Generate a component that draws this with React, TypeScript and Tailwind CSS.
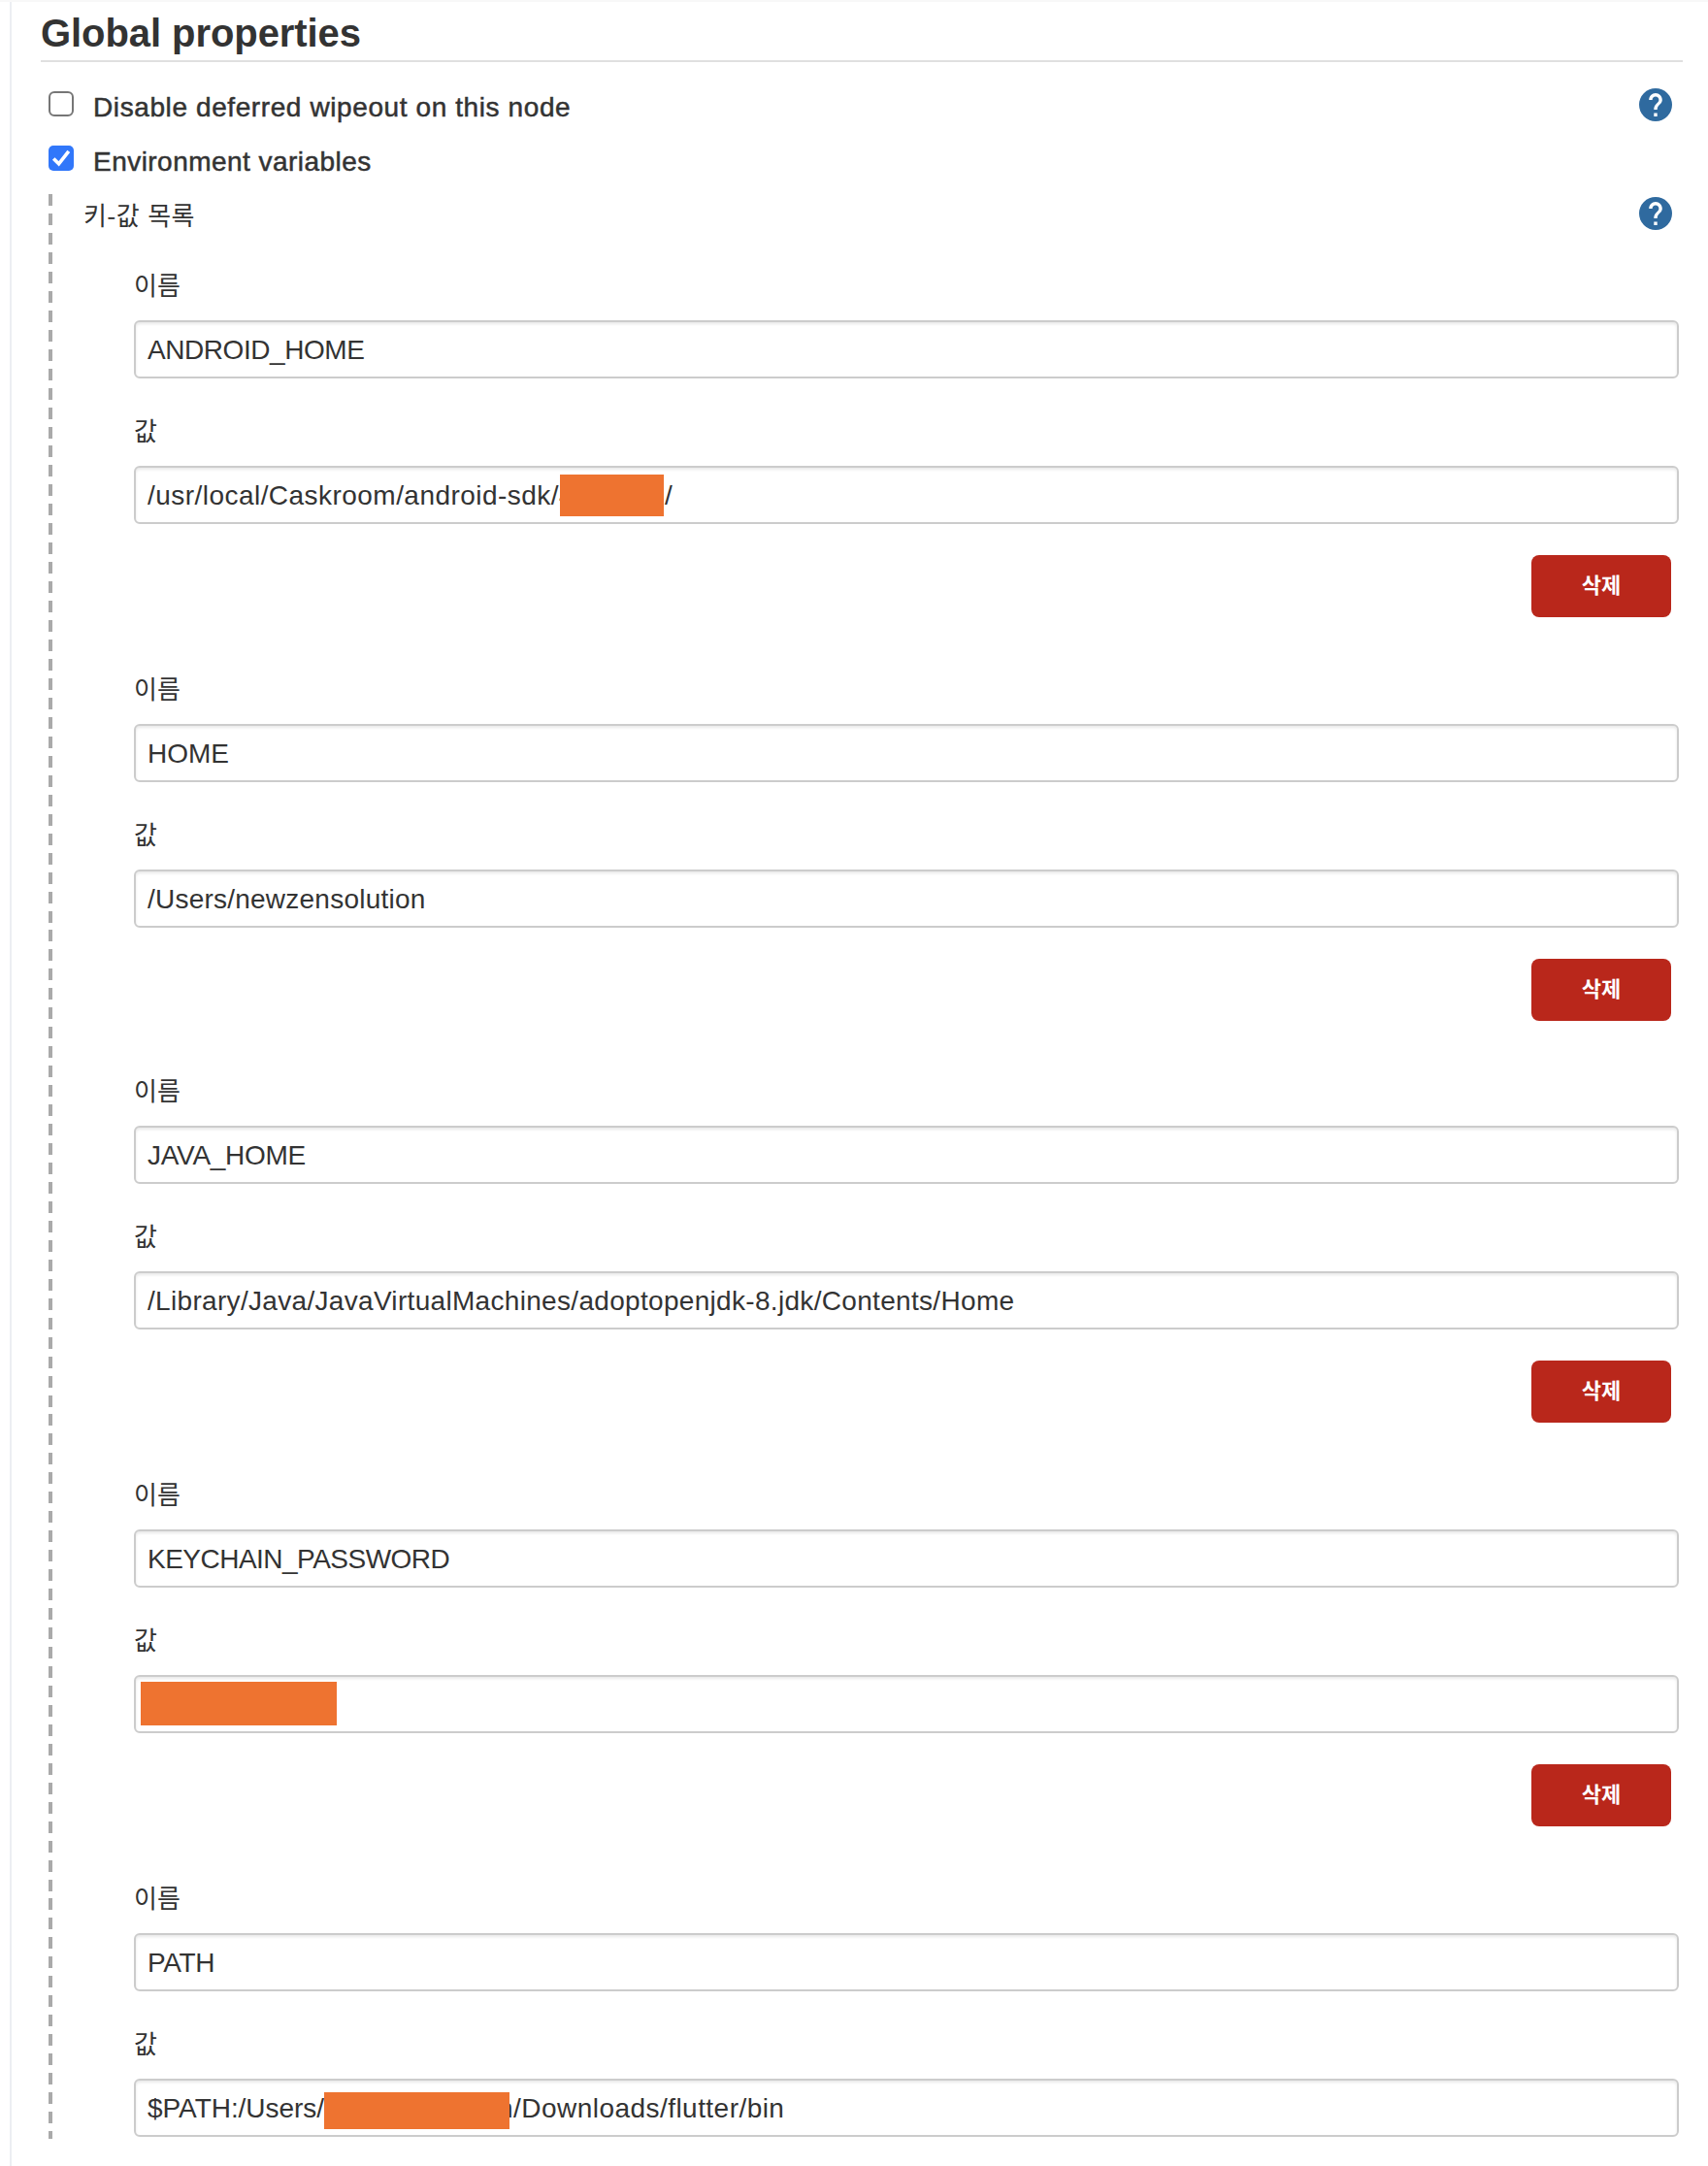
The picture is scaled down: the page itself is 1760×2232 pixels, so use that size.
import type { ReactNode } from "react";

type Variable = {
  name: ReactNode;
  value: ReactNode;
};

function Redaction({ className }: { className: string }) {
  return <span className={`relative shrink-0 bg-[#ee7330] ${className}`} />;
}

const variables: Variable[] = [
  {
    name: <span className="tracking-[-0.434px]">ANDROID_HOME</span>,
    value: (
      <>
        <span className="w-[425px] tracking-[0.459px]">/usr/local/Caskroom/android-sdk/4</span>
        <Redaction className="mt-[7px] h-[43px] w-[107px]" />
        <span className="ml-px">/</span>
      </>
    ),
  },
  {
    name: <span>HOME</span>,
    value: <span className="tracking-[0.228px]">/Users/newzensolution</span>,
  },
  {
    name: <span className="tracking-[-0.273px]">JAVA_HOME</span>,
    value: (
      <span className="tracking-[0.315px]">
        /Library/Java/JavaVirtualMachines/adoptopenjdk-8.jdk/Contents/Home
      </span>
    ),
  },
  {
    name: <span className="tracking-[-0.513px]">KEYCHAIN_PASSWORD</span>,
    value: <Redaction className="mt-[5px] -ml-[7px] h-[45px] w-[202px]" />,
  },
  {
    name: <span className="tracking-[-0.383px]">PATH</span>,
    value: (
      <>
        <span className="w-[182px] tracking-[-0.043px]">$PATH:/Users/</span>
        <Redaction className="z-10 mt-[12px] h-[38px] w-[191px]" />
        <span className="-ml-[12px] tracking-[0.46px]">n/Downloads/flutter/bin</span>
      </>
    ),
  },
];

function HelpButton() {
  return (
    <button type="button" aria-label="Help" className="shrink-0">
      <svg viewBox="2 2 20 20" className="size-[34px]">
        <circle cx="12" cy="12" r="10" fill="#2f6a9f" />
        <path
          fill="#fff"
          d="M13 19h-2v-2h2v2zm2.07-7.75-.9.92C13.45 12.9 13 13.5 13 15h-2v-.5c0-1.1.45-2.1 1.17-2.83l1.24-1.26c.37-.36.59-.86.59-1.41 0-1.1-.9-2-2-2s-2 .9-2 2H8c0-2.21 1.79-4 4-4s4 1.79 4 4c0 .88-.36 1.68-.93 2.25z"
        />
      </svg>
    </button>
  );
}

function Checkbox({ checked }: { checked: boolean }) {
  if (!checked) {
    return (
      <span
        role="checkbox"
        aria-checked={false}
        className="size-[26px] shrink-0 rounded-[6px] border-2 border-[#767676] bg-white"
      />
    );
  }
  return (
    <span role="checkbox" aria-checked className="size-[26px] shrink-0 rounded-[5px] bg-[#3177fa]">
      <svg viewBox="0 0 26 26" className="size-full">
        <path d="M5.2 13.4 10.6 18.8 20.8 5.8" fill="none" stroke="#fff" strokeWidth="3.6" />
      </svg>
    </span>
  );
}

function OptionRow({
  checked,
  help,
  children,
}: {
  checked: boolean;
  help?: boolean;
  children: ReactNode;
}) {
  return (
    <div className="flex h-12 items-center pr-[11px] pl-2">
      <div className="-mt-[2px] flex">
        <Checkbox checked={checked} />
      </div>
      <div className="mt-1.5 ml-5 flex-1 leading-[48px] [-webkit-text-stroke:0.5px_#333]">
        {children}
      </div>
      {help && <HelpButton />}
    </div>
  );
}

function Label({ children }: { children: ReactNode }) {
  return (
    <div className="h-10 font-['Noto_Sans_CJK_KR',sans-serif] text-[26px] leading-[42px]">
      {children}
    </div>
  );
}

function Field({ label, children }: { label: string; children: ReactNode }) {
  return (
    <div>
      <Label>{label}</Label>
      <div className="mt-[18px] flex h-[60px] rounded-[6px] border-2 border-[#ccc] bg-white px-3 leading-[57px] whitespace-nowrap shadow-[inset_0_2px_3px_rgba(0,0,0,0.09)]">
        {children}
      </div>
    </div>
  );
}

export default function App() {
  return (
    <div className="h-[2232px] w-[1760px] overflow-hidden border-t-2 border-[#f8f8f8] bg-white pl-[10px] font-['Liberation_Sans','Noto_Sans_CJK_KR',sans-serif] text-[28px] text-[#333]">
      <main className="h-full border-l-2 border-[#eceef2] pr-[26px] pl-[30px]">
        <h1 className="border-b-2 border-[#e0e0e0] pt-1 text-[40px] leading-[56px] font-bold tracking-[-0.071px]">
          Global properties
        </h1>

        <div className="mt-5 flex flex-col gap-2">
          <OptionRow checked={false} help>
            <span className="tracking-[0.6px]">Disable deferred wipeout on this node</span>
          </OptionRow>
          <OptionRow checked>
            <span className="tracking-[0.46px]">Environment variables</span>
          </OptionRow>
        </div>

        <section className="mt-3 ml-2 flex h-[2004px]">
          <div className="w-1 shrink-0 bg-[repeating-linear-gradient(to_bottom,#aaa_0px,#aaa_12px,transparent_12px,transparent_19.96px)]" />
          <div className="flex-1 pl-8">
            <div className="flex h-10 items-center justify-between pr-[11px]">
              <Label>
                <span className="tracking-[0.4px] [word-spacing:2px]">키-값 목록</span>
              </Label>
              <HelpButton />
            </div>
            <div className="mt-8 ml-[52px] pr-1">
              {variables.map((variable, index) => (
                <div key={index} className={index === 2 ? "-mt-0.5" : ""}>
                  <Field label="이름">{variable.name}</Field>
                  <div className="mt-8">
                    <Field label="값">{variable.value}</Field>
                  </div>
                  {index < variables.length - 1 && (
                    <div className="mt-8 mb-[52px] flex justify-end pr-2">
                      <button
                        type="button"
                        className="h-16 w-36 rounded-lg bg-[#b9271b] pb-[5px] font-['Noto_Sans_CJK_KR',sans-serif] text-[22px] font-bold text-white"
                      >
                        삭제
                      </button>
                    </div>
                  )}
                </div>
              ))}
            </div>
          </div>
        </section>
      </main>
    </div>
  );
}
